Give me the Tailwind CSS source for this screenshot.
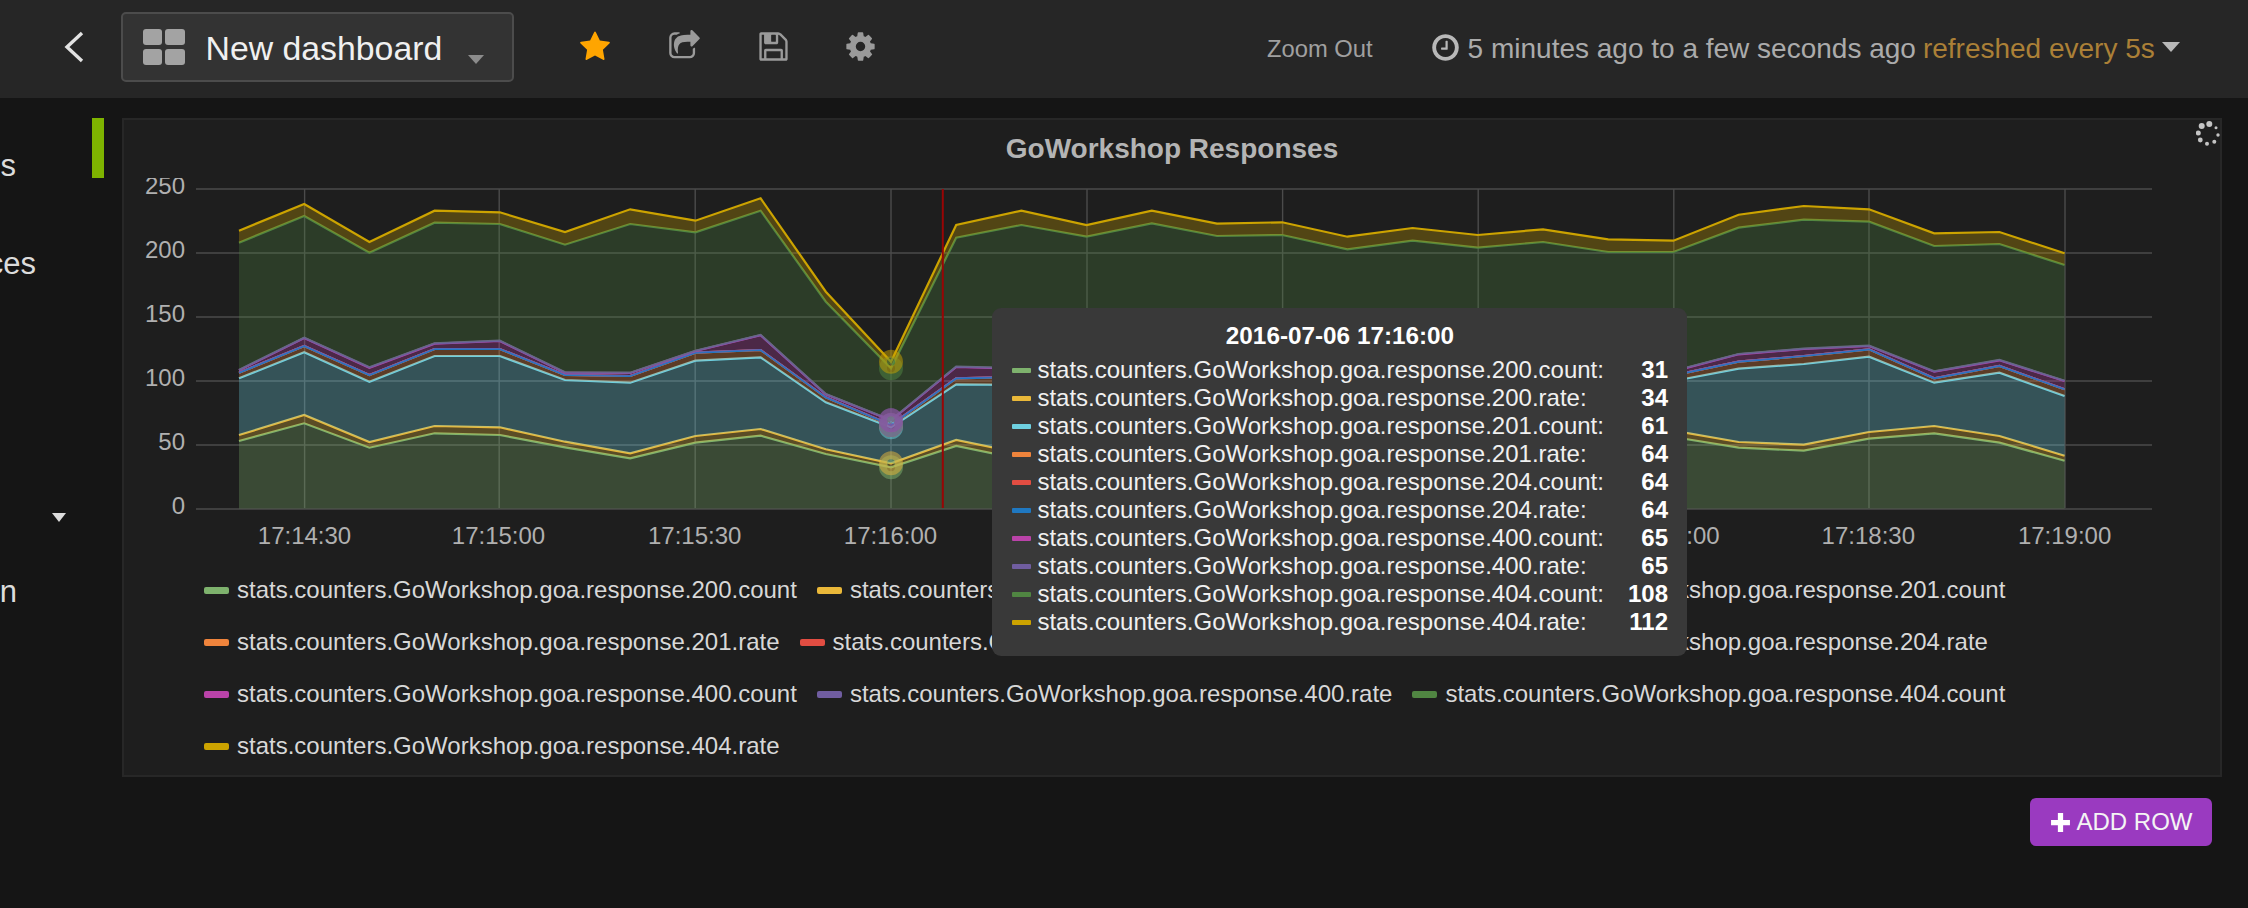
<!DOCTYPE html>
<html lang="en">
<head>
<meta charset="utf-8">
<title>New dashboard</title>
<script src="https://cdn.jsdelivr.net/npm/@tailwindcss/browser@4"></script>
</head>
<body class="bg-[#151515]">
<div class="w-[2248px] h-[908px] overflow-hidden bg-[#151515] font-['Liberation_Sans',Arial,sans-serif]">

  <header class="flex items-center h-[98px] bg-[#262626]">
    <svg class="ml-[62px] -mt-[5px] w-[24px] h-[34px] shrink-0" viewBox="0 0 24 34" fill="none"><path d="M20 3 L5 17 L20 31" stroke="#e2e2e2" stroke-width="3.4"/></svg>
    <div class="ml-[34.5px] -mt-[4px] w-[393px] h-[70px] box-border shrink-0 flex items-center rounded-[5px] border-2 border-[#4c4c4c] bg-[#333333]">
      <div class="ml-[20px] grid grid-cols-2 gap-x-[3px] gap-y-[4px] w-[42px] shrink-0">
        <span class="h-[16px] rounded-[3px] bg-[#a3a3a3]"></span><span class="h-[16px] rounded-[3px] bg-[#a3a3a3]"></span>
        <span class="h-[16px] rounded-[3px] bg-[#a3a3a3]"></span><span class="h-[16px] rounded-[3px] bg-[#a3a3a3]"></span>
      </div>
      <span class="ml-[21px] mt-[4px] text-[33.8px] leading-none text-[#f0f0f0] whitespace-nowrap">New dashboard</span>
      <span class="ml-[26px] mt-[25px] w-0 h-0 border-x-[8px] border-x-transparent border-t-[9px] border-t-[#8c8c8c]"></span>
    </div>
    <svg class="ml-[65.5px] -mt-[5px] w-[32px] h-[32px] shrink-0" viewBox="0 0 1792 1792" fill="#ffa500"><path d="M1728 647q0 22-26 48l-363 354 86 500q1 7 1 20 0 21-10.5 35.5t-30.5 14.5q-19 0-40-12l-449-236-449 236q-22 12-40 12-21 0-31.5-14.5t-10.5-35.5q0-6 2-20l86-500-364-354q-25-27-25-48 0-37 56-46l502-73 225-455q19-41 49-41t49 41l225 455 502 73q56 9 56 46z"/></svg>
    <svg class="ml-[57px] -mt-[5px] w-[33px] h-[33px] shrink-0" viewBox="0 0 1792 1792" fill="#9a9a9a"><path d="M1472 989v259q0 119-84.5 203.5t-203.5 84.5h-832q-119 0-203.5-84.5t-84.5-203.5v-832q0-119 84.5-203.5t203.5-84.5h255q13 0 22.5 9.5t9.5 22.5q0 27-26 32-77 26-133 60-10 4-16 4h-112q-66 0-113 47t-47 113v832q0 66 47 113t113 47h832q66 0 113-47t47-113v-214q0-19 18-29 28-13 54-37 16-16 35-8 21 9 21 29zm237-496l-384 384q-18 19-45 19-12 0-25-5-39-17-39-59v-192h-160q-323 0-438 131-119 137-74 473 3 23-20 34-8 2-12 2-16 0-26-13-10-14-21-31t-39.5-68.5-49.5-99.5-38.5-114-17.5-122q0-49 3.5-91t14-90 28-88 47-81.5 68.5-74 94.5-61.5 124.5-48.5 159.5-30.5 196.5-11h160v-192q0-42 39-59 13-5 25-5 26 0 45 19l384 384q19 19 19 45t-19 45z"/></svg>
    <svg class="ml-[56px] -mt-[5px] w-[33px] h-[33px] shrink-0" viewBox="0 0 1792 1792" fill="#9a9a9a"><path d="M512 1536h768v-384h-768v384zm896 0h128v-896q0-14-10-38.5t-20-34.5l-281-281q-10-10-34-20t-39-10v416q0 40-28 68t-68 28h-576q-40 0-68-28t-28-68v-416h-128v1280h128v-416q0-40 28-68t68-28h832q40 0 68 28t28 68v416zm-384-928v-320q0-13-9.5-22.500t-22.500-9.500h-192q-13 0-22.500 9.500t-9.500 22.500v320q0 13 9.500 22.500t22.500 9.500h192q13 0 22.500-9.500t9.500-22.500zm640 32v928q0 40-28 68t-68 28h-1344q-40 0-68-28t-28-68v-1344q0-40 28-68t68-28h928q40 0 88 20t76 48l280 280q28 28 48 76t20 88z"/></svg>
    <svg class="ml-[54px] -mt-[5px] w-[33px] h-[33px] shrink-0" viewBox="0 0 1792 1792" fill="#9a9a9a"><path d="M1152 896q0-106-75-181t-181-75-181 75-75 181 75 181 181 75 181-75 75-181zm512-109v222q0 12-8 23t-20 13l-185 28q-19 54-39 91 35 50 107 138 10 12 10 25t-9 23q-27 37-99 108t-94 71q-12 0-26-9l-138-108q-44 23-91 38-16 136-29 186-7 28-36 28h-222q-14 0-24.5-8.5t-11.5-21.5l-28-184q-49-16-90-37l-141 107q-10 9-25 9-14 0-25-11-126-114-165-168-7-10-7-23 0-12 8-23 15-21 51-66.5t54-70.5q-27-50-41-99l-183-27q-13-2-21-12.5t-8-23.5v-222q0-12 8-23t19-13l186-28q14-46 39-92-40-57-107-138-10-12-10-24 0-10 9-23 26-36 98.5-107.5t94.5-71.5q13 0 26 10l138 107q44-23 91-38 16-136 29-186 7-28 36-28h222q14 0 24.5 8.5t11.5 21.5l28 184q49 16 90 37l142-107q9-9 24-9 13 0 25 10 129 119 165 170 7 8 7 22 0 12-8 23-15 21-51 66.5t-54 70.5q26 50 41 98l183 28q13 2 21 12.5t8 23.5z"/></svg>
    <span class="ml-[390px] text-[23.75px] leading-none text-[#a0a0a0] whitespace-nowrap">Zoom Out</span>
    <svg class="ml-[57px] -mt-[4px] w-[31px] h-[31px] shrink-0" viewBox="0 0 1792 1792" fill="#b8b8b8"><path d="M1024 544v448q0 14-9 23t-23 9h-320q-14 0-23-9t-9-23v-64q0-14 9-23t23-9h224v-352q0-14 9-23t23-9h64q14 0 23 9t9 23zm416 352q0-148-73-273t-198-198-273-73-273 73-198 198-73 273 73 273 198 198 273 73 273-73 198-198 73-273zm224 0q0 209-103 385.5t-279.5 279.5-385.5 103-385.5-103-279.5-279.5-103-385.500 103-385.500 279.5-279.500 385.500-103 385.500 103 279.500 279.500 103 385.500z"/></svg>
    <span class="ml-[7px] text-[28px] leading-none text-[#ababab] whitespace-nowrap">5 minutes ago to a few seconds ago</span>
    <span class="ml-[7px] text-[28px] leading-none text-[#ab8037] whitespace-nowrap">refreshed every 5s</span>
    <span class="ml-[7px] -mt-[5px] w-0 h-0 border-x-[9px] border-x-transparent border-t-[10px] border-t-[#b8b8b8]"></span>
  </header>

  <main class="flex items-start">
    <nav class="w-[92px] shrink-0 text-[31px] leading-[40px] text-[#dcdcdc]">
      <div class="mt-[48px] w-[16px] h-[40px] overflow-hidden flex justify-end"><span class="shrink-0">s</span></div>
      <div class="mt-[58px] w-[36px] h-[40px] overflow-hidden flex justify-end"><span class="shrink-0">ces</span></div>
      <div class="ml-[52px] mt-[229px] w-0 h-0 border-x-[7px] border-x-transparent border-t-[9px] border-t-[#dcdcdc]"></div>
      <div class="mt-[50px] w-[17px] h-[40px] overflow-hidden flex justify-end"><span class="shrink-0">n</span></div>
    </nav>
    <div class="mt-[20px] w-[12px] h-[60px] shrink-0 bg-[#7eb300]"></div>

    <div class="ml-[18px] mt-[20px] flex flex-col items-end w-[2100px] shrink-0">
      <section class="relative w-[2100px] h-[659px] box-border border-2 border-[#272727] bg-[#1e1e1e]">
        <h2 class="h-[58px] text-center text-[28px] leading-[58px] font-bold text-[#b4b4b4]">GoWorkshop Responses</h2>
        <svg class="block" width="2096" height="378" viewBox="124 178 2096 378">
          <g stroke="#4b4b4b" stroke-width="1.7">
            <line x1="196" x2="2152" y1="189" y2="189"/><line x1="196" x2="2152" y1="253" y2="253"/><line x1="196" x2="2152" y1="317" y2="317"/><line x1="196" x2="2152" y1="381" y2="381"/><line x1="196" x2="2152" y1="445" y2="445"/><line x1="196" x2="2152" y1="509" y2="509"/>
          </g>
          <g stroke="#4b4b4b" stroke-width="1.4">
            <line x1="304.6" x2="304.6" y1="189" y2="508"/><line x1="499.2" x2="499.2" y1="189" y2="508"/><line x1="695.2" x2="695.2" y1="189" y2="508"/><line x1="891" x2="891" y1="189" y2="508"/><line x1="1087" x2="1087" y1="189" y2="508"/><line x1="1282.6" x2="1282.6" y1="189" y2="508"/><line x1="1478.2" x2="1478.2" y1="189" y2="508"/><line x1="1673.8" x2="1673.8" y1="189" y2="508"/><line x1="1869" x2="1869" y1="189" y2="508"/><line x1="2065" x2="2065" y1="189" y2="508"/>
          </g>
          <g id="series"></g>
          <line x1="942.8" x2="942.8" y1="189" y2="508" stroke="#990505" stroke-width="2"/>
          <g fill="#b0b0b0" font-size="24" text-anchor="end">
            <text x="185" y="193.500">250</text><text x="185" y="257.500">200</text><text x="185" y="321.500">150</text><text x="185" y="385.500">100</text><text x="185" y="449.500">50</text><text x="185" y="513.500">0</text>
          </g>
          <g fill="#b0b0b0" font-size="24" text-anchor="middle">
            <text x="304.500" y="544">17:14:30</text><text x="498.500" y="544">17:15:00</text><text x="694.700" y="544">17:15:30</text><text x="890.500" y="544">17:16:00</text><text x="1087" y="544">17:16:30</text><text x="1282.600" y="544">17:17:00</text><text x="1478" y="544">17:17:30</text><text x="1673" y="544">17:18:00</text><text x="1868.300" y="544">17:18:30</text><text x="2064.600" y="544">17:19:00</text>
          </g>
        </svg>
        <ul class="mt-[8px] ml-[80px] w-[1940px] flex flex-wrap text-[24px] leading-[52px] text-[#d8d8d8]">
          <li class="flex items-center mr-[20px]"><span class="w-[25px] h-[7px] mr-[8px] rounded-[2px] bg-[#7eb26d]"></span>stats.counters.GoWorkshop.goa.response.200.count</li>
          <li class="flex items-center mr-[20px]"><span class="w-[25px] h-[7px] mr-[8px] rounded-[2px] bg-[#eab839]"></span>stats.counters.GoWorkshop.goa.response.200.rate</li>
          <li class="flex items-center mr-[20px]"><span class="w-[25px] h-[7px] mr-[8px] rounded-[2px] bg-[#6ed0e0]"></span>stats.counters.GoWorkshop.goa.response.201.count</li>
          <li class="flex items-center mr-[20px]"><span class="w-[25px] h-[7px] mr-[8px] rounded-[2px] bg-[#ef843c]"></span>stats.counters.GoWorkshop.goa.response.201.rate</li>
          <li class="flex items-center mr-[20px]"><span class="w-[25px] h-[7px] mr-[8px] rounded-[2px] bg-[#e24d42]"></span>stats.counters.GoWorkshop.goa.response.204.count</li>
          <li class="flex items-center mr-[20px]"><span class="w-[25px] h-[7px] mr-[8px] rounded-[2px] bg-[#1f78c1]"></span>stats.counters.GoWorkshop.goa.response.204.rate</li>
          <li class="flex items-center mr-[20px]"><span class="w-[25px] h-[7px] mr-[8px] rounded-[2px] bg-[#ba43a9]"></span>stats.counters.GoWorkshop.goa.response.400.count</li>
          <li class="flex items-center mr-[20px]"><span class="w-[25px] h-[7px] mr-[8px] rounded-[2px] bg-[#705da0]"></span>stats.counters.GoWorkshop.goa.response.400.rate</li>
          <li class="flex items-center mr-[20px]"><span class="w-[25px] h-[7px] mr-[8px] rounded-[2px] bg-[#508642]"></span>stats.counters.GoWorkshop.goa.response.404.count</li>
          <li class="flex items-center mr-[20px]"><span class="w-[25px] h-[7px] mr-[8px] rounded-[2px] bg-[#cca300]"></span>stats.counters.GoWorkshop.goa.response.404.rate</li>
        </ul>

        <svg class="absolute left-[2072px] top-[0px]" width="26" height="30" viewBox="2196 120 26 30" fill="#c4c4c4">
          <circle cx="2209.3" cy="124" r="3"/><circle cx="2201.7" cy="126" r="3"/><circle cx="2216" cy="127.7" r="1.5"/><circle cx="2198.3" cy="133" r="2.5"/><circle cx="2218" cy="135" r="1.7"/><circle cx="2200.3" cy="140" r="2.4"/><circle cx="2214.3" cy="141.7" r="2"/><circle cx="2207" cy="143.7" r="2"/>
        </svg>

        <div class="absolute left-[868px] top-[188px] w-[695px] h-[348px] box-border pt-[14px] pl-[20px] pr-[19px] rounded-[9px] bg-[#393939] text-[24px] leading-[28px] text-[#f0f0f0]">
          <div class="mb-[6px] text-center text-[24.3px] font-bold text-white">2016-07-06 17:16:00</div>
          <div class="flex items-center"><span class="w-[19.4px] h-[5px] mr-[6px] rounded-[1px] bg-[#7eb26d]"></span><span class="flex-1">stats.counters.GoWorkshop.goa.response.200.count:</span><b class="text-white">31</b></div>
          <div class="flex items-center"><span class="w-[19.4px] h-[5px] mr-[6px] rounded-[1px] bg-[#eab839]"></span><span class="flex-1">stats.counters.GoWorkshop.goa.response.200.rate:</span><b class="text-white">34</b></div>
          <div class="flex items-center"><span class="w-[19.4px] h-[5px] mr-[6px] rounded-[1px] bg-[#6ed0e0]"></span><span class="flex-1">stats.counters.GoWorkshop.goa.response.201.count:</span><b class="text-white">61</b></div>
          <div class="flex items-center"><span class="w-[19.4px] h-[5px] mr-[6px] rounded-[1px] bg-[#ef843c]"></span><span class="flex-1">stats.counters.GoWorkshop.goa.response.201.rate:</span><b class="text-white">64</b></div>
          <div class="flex items-center"><span class="w-[19.4px] h-[5px] mr-[6px] rounded-[1px] bg-[#e24d42]"></span><span class="flex-1">stats.counters.GoWorkshop.goa.response.204.count:</span><b class="text-white">64</b></div>
          <div class="flex items-center"><span class="w-[19.4px] h-[5px] mr-[6px] rounded-[1px] bg-[#1f78c1]"></span><span class="flex-1">stats.counters.GoWorkshop.goa.response.204.rate:</span><b class="text-white">64</b></div>
          <div class="flex items-center"><span class="w-[19.4px] h-[5px] mr-[6px] rounded-[1px] bg-[#ba43a9]"></span><span class="flex-1">stats.counters.GoWorkshop.goa.response.400.count:</span><b class="text-white">65</b></div>
          <div class="flex items-center"><span class="w-[19.4px] h-[5px] mr-[6px] rounded-[1px] bg-[#705da0]"></span><span class="flex-1">stats.counters.GoWorkshop.goa.response.400.rate:</span><b class="text-white">65</b></div>
          <div class="flex items-center"><span class="w-[19.4px] h-[5px] mr-[6px] rounded-[1px] bg-[#508642]"></span><span class="flex-1">stats.counters.GoWorkshop.goa.response.404.count:</span><b class="text-white">108</b></div>
          <div class="flex items-center"><span class="w-[19.4px] h-[5px] mr-[6px] rounded-[1px] bg-[#cca300]"></span><span class="flex-1">stats.counters.GoWorkshop.goa.response.404.rate:</span><b class="text-white">112</b></div>
        </div>
      </section>

      <button class="mt-[21px] mr-[10px] w-[182px] h-[48px] flex items-center justify-center gap-[6px] rounded-[6px] bg-[#9a3ac0] text-[24px] leading-none text-[#f4f4f4]">
        <svg class="w-[21px] h-[21px] shrink-0" viewBox="0 0 20 20" fill="#ffffff"><path d="M7.5 1h5v6.5H19v5h-6.500V19h-5v-6.500H1v-5h6.500z"/></svg>
        <span>ADD ROW</span>
      </button>
    </div>
  </main>
</div>

<script>
  var L1=[813,760,833,790,795,832,865,818,797,852,892,828,868,868,868,868,868,838,818,808,798,798,801,833,842,806,790,818,872];
  var L2=[795,735,816,768,772,815,850,798,777,838,880,810,850,850,850,850,850,820,800,790,780,780,782,816,824,786,768,798,857];
  var L3=[625,547,635,558,558,630,638,572,562,697,772,643,645,645,645,640,640,640,640,640,640,636,633,596,582,560,638,608,678];
  var L6=[608,528,615,537,537,615,618,548,540,682,765,625,620,620,620,620,620,620,620,620,620,618,616,575,558,538,625,588,658];
  var L8=[600,503,592,520,512,607,608,542,495,672,750,590,595,600,600,600,600,600,600,600,600,600,603,552,536,527,604,570,632];
  var L9=[218,138,248,158,162,224,162,187,122,395,595,203,165,200,160,198,195,238,212,233,216,246,246,173,149,155,228,222,285];
  var L10=[182,102,216,122,127,186,118,152,85,365,575,165,122,165,122,161,157,200,174,195,178,208,212,134,108,118,190,186,250];
  var L7=L8.map(function(v){return v+1});
  var stack=[[L1,'#7eb26d'],[L2,'#eab839'],[L3,'#6ed0e0'],[L6,'#ef843c'],[L6,'#e24d42'],[L6,'#1f78c1'],[L7,'#ba43a9'],[L8,'#705da0'],[L9,'#508642'],[L10,'#cca300']];
  var px=function(i){return (239+65.2*i).toFixed(1)}, py=function(v){return (170+v/3).toFixed(1)};
  var out='', prev=null;
  stack.forEach(function(s){
    var top=s[0].map(function(v,i){return px(i)+','+py(v)});
    var bottom=prev?prev.map(function(v,i){return px(i)+','+py(v)}).reverse():[px(28)+',508.5',px(0)+',508.5'];
    out+='<polygon points="'+top.concat(bottom).join(' ')+'" fill="'+s[1]+'" fill-opacity="0.3"/>';
    out+='<polyline points="'+top.join(' ')+'" fill="none" stroke="'+s[1]+'" stroke-width="2.2" stroke-linejoin="miter"/>';
    prev=s[0];
  });
  stack.forEach(function(s){
    out+='<circle cx="'+px(10)+'" cy="'+py(s[0][10])+'" r="8" fill="none" stroke="'+s[1]+'" stroke-width="8" stroke-opacity="0.5"/>';
  });
  document.getElementById('series').innerHTML=out;
</script>
</body>
</html>
